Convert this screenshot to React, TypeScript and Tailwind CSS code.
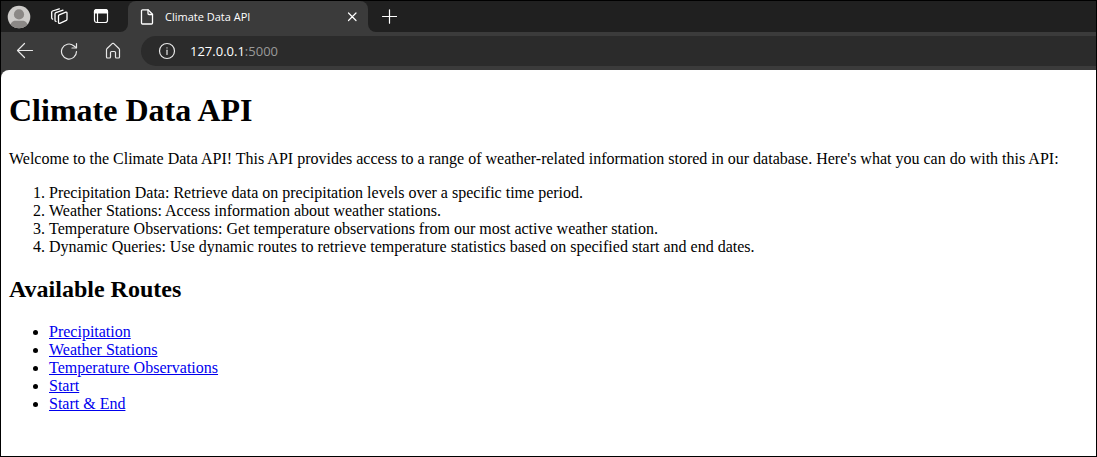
import React from "react";

const capabilities = [
  "Precipitation Data: Retrieve data on precipitation levels over a specific time period.",
  "Weather Stations: Access information about weather stations.",
  "Temperature Observations: Get temperature observations from our most active weather station.",
  "Dynamic Queries: Use dynamic routes to retrieve temperature statistics based on specified start and end dates.",
];

const routes = [
  { label: "Precipitation", href: "#precipitation" },
  { label: "Weather Stations", href: "#stations" },
  { label: "Temperature Observations", href: "#tobs" },
  { label: "Start", href: "#start" },
  { label: "Start & End", href: "#start-end" },
];

function Avatar() {
  return (
    <svg width="24" height="24" viewBox="0 0 24 24" aria-hidden="true">
      <defs>
        <clipPath id="avatar-clip">
          <circle cx="12" cy="12" r="11.3" />
        </clipPath>
      </defs>
      <g clipPath="url(#avatar-clip)">
        <rect width="24" height="24" fill="#cdcbc9" />
        <circle cx="12" cy="9.4" r="5.1" fill="#8b8886" />
        <path d="M3.5 24v-3.5c0-3 2.5-4.8 5-4.8h7c2.500 0 5 1.800 5 4.800V24z" fill="#8b8886" />
      </g>
    </svg>
  );
}

function Icon({ size, width = 1.2, children }: { size: number; width?: number; children: React.ReactNode }) {
  return (
    <svg
      width={size}
      height={size}
      viewBox={`0 0 ${size} ${size}`}
      fill="none"
      stroke="currentColor"
      strokeWidth={width}
      strokeLinecap="round"
      strokeLinejoin="round"
      aria-hidden="true"
      className="shrink-0"
    >
      {children}
    </svg>
  );
}

function TabStrip() {
  return (
    <div className="flex h-[31px] bg-[#3b3b3b]">
      <div className="flex w-[127px] shrink-0 items-center gap-5 rounded-br-lg bg-[#202020] pl-1.5 text-white">
        <button aria-label="Profile">
          <Avatar />
        </button>
        <button aria-label="Workspaces" className="mr-1">
          <Icon size={18} width={1.3}>
            <path d="M8.200 6.800 14.800 4.100Q16 3.800 16 5V11.200Q16 12 15.300 12.400L8.800 15.300Q7.500 15.700 7.500 14.500V7.800Q7.500 7 8.200 6.800Z" />
            <path d="M5 13.400Q4 13.300 4 12.200V6Q4 5.100 4.900 4.700L12 2.100" />
            <path d="M1.600 11.200Q.7 10.900.7 9.800V4.200Q.7 3.400 1.500 3L8.300.8" />
          </Icon>
        </button>
        <button aria-label="Tab actions">
          <Icon size={18} width={1.2}>
            <rect x="1.500" y="1.500" width="13" height="13" rx="2.200" />
            <path d="M1.500 5v-1.500a2 2 0 0 1 2-2h9a2 2 0 0 1 2 2v1.500z" fill="currentColor" />
            <path d="M4.500 5v9.500" />
          </Icon>
        </button>
      </div>
      <div className="w-[240px] shrink-0 bg-[#202020]">
        <div className="flex h-full items-center rounded-t-lg bg-[#3b3b3b] pr-2 pl-3 text-white">
          <Icon size={16} width={1.3}>
            <path d="M1.500 1.800a1 1 0 0 1 1-1h5.500l4.500 4.500v8.700a1 1 0 0 1-1 1h-9a1 1 0 0 1-1-1z" />
            <path d="M8 .8v3.700a1 1 0 0 0 1 1h3.500" />
          </Icon>
          <span className="ml-[9px] flex-1 truncate font-['Open_Sans',sans-serif] text-[11px] leading-4">
            Climate Data API
          </span>
          <button aria-label="Close tab">
            <Icon size={16}>
              <path d="M4.500 4l7.500 7.500M12 4l-7.500 7.500" />
            </Icon>
          </button>
        </div>
      </div>
      <div className="flex flex-1 items-center rounded-bl-lg bg-[#202020] pl-[13px] text-white">
        <button aria-label="New tab">
          <Icon size={16}>
            <path d="M8.500 .8v13.400M1.500 7.500h14" />
          </Icon>
        </button>
      </div>
    </div>
  );
}

function Toolbar() {
  return (
    <div className="flex h-[38px] items-center pl-[15px] text-[#e8e8e8]">
      <button aria-label="Back" className="mr-[26px]">
        <Icon size={18}>
          <path d="M16.500 8.500H1.500M8.500 1.500l-7 7 7 7" />
        </Icon>
      </button>
      <button aria-label="Refresh" className="mr-[26px]">
        <Icon size={18}>
          <path d="M16.500 9.500a7.500 7.500 0 1 1-2.800-5.800L16 5.500" />
          <path d="M16.500 1.500v4.500h-4.500" />
        </Icon>
      </button>
      <button aria-label="Home" className="mr-[19px]">
        <Icon size={18}>
          <path d="M2.500 7.700q0-.7.600-1.200L8.200 1.600q.8-.6 1.600 0L14.900 6.500q.6.500.6 1.200v7.300a1 1 0 0 1-1 1h-2a1 1 0 0 1-1-1V10.500a1 1 0 0 0-1-1h-3a1 1 0 0 0-1 1v4.500a1 1 0 0 1-1 1h-2a1 1 0 0 1-1-1z" />
        </Icon>
      </button>
      <div className="flex h-[30px] flex-1 items-center rounded-l-full bg-[#2b2b2b] pl-[17px] font-['Open_Sans',sans-serif] text-[13px] leading-5">
        <button aria-label="View site information" className="mr-[14px]">
          <Icon size={18}>
            <circle cx="9" cy="9" r="7.500" />
            <path d="M9 8.200v4.300" />
            <path d="M9 5.800v.2" />
          </Icon>
        </button>
        <input
          aria-label="Address"
          defaultValue="127.0.0.1"
          className="field-sizing-content bg-transparent p-0 text-white outline-none"
        />
        <span className="text-[#9a9a9a]">:5000</span>
      </div>
    </div>
  );
}

export default function App() {
  return (
    <div className="flex min-h-screen flex-col border border-black bg-[#3b3b3b]">
      <header>
        <TabStrip />
        <Toolbar />
      </header>
      <main className="flex-1 rounded-tl-lg bg-white px-2 pt-[22px] pb-8 font-['Liberation_Serif',serif] text-base leading-[18px] text-black">
        <h1 className="text-[32px] leading-[37px] font-bold">Climate Data API</h1>
        <p className="mt-[21px]">
          Welcome to the Climate Data API! This API provides access to a range of weather-related information stored in
          our database. Here's what you can do with this API:
        </p>
        <ol className="mt-4 list-decimal pl-10">
          {capabilities.map((text) => (
            <li key={text}>{text}</li>
          ))}
        </ol>
        <h2 className="mt-5 text-2xl leading-[27px] font-bold">Available Routes</h2>
        <ul className="mt-5 list-disc pl-10">
          {routes.map((route) => (
            <li key={route.label}>
              <a href={route.href} className="text-[#0000ee] underline">
                {route.label}
              </a>
            </li>
          ))}
        </ul>
      </main>
    </div>
  );
}
